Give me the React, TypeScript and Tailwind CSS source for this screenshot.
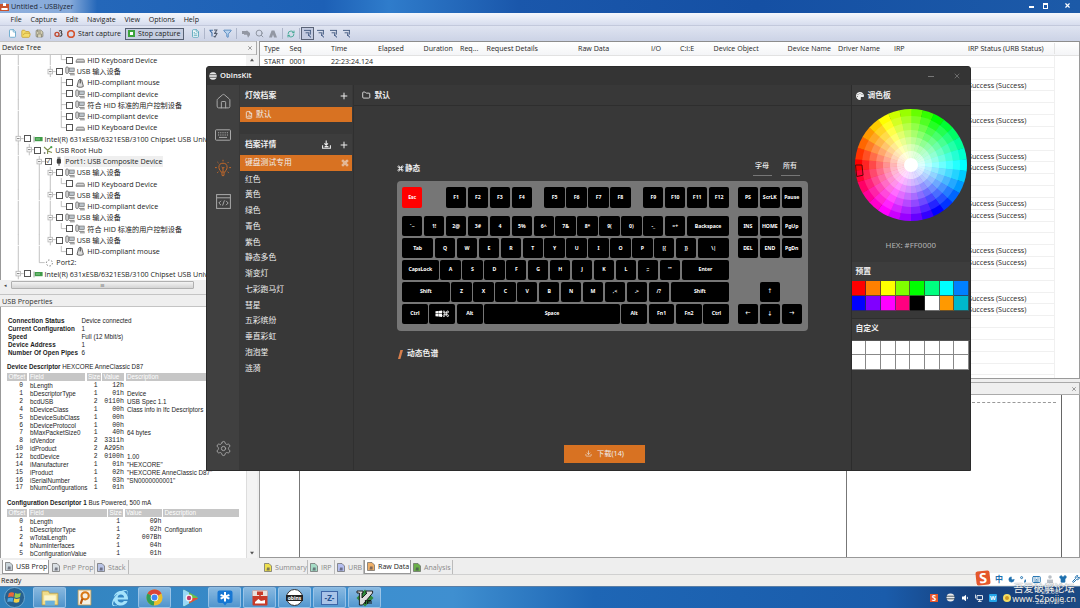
import React from "react";
import {
  House,
  Keyboard,
  Settings,
  Command,
  Plus,
  File,
  FolderOpen,
  Folder,
  Save,
  Search,
  Filter,
  RefreshCw,
  X,
  FileChartColumn,
  Download,
  Circle,
  Wrench,
  Shirt,
  Moon,
  FileText,
} from "lucide-react";
import { FaPalette, FaWindows, FaVolumeDown, FaInternetExplorer } from "react-icons/fa";

const ui = "font-['Open_Sans','Noto_Sans_CJK_SC',sans-serif]";

/* ---------- device tree ---------- */

type Node = { g: string; icon: string; label: string; checked?: boolean };

const tree: Node[] = [
  { g: "|  |L", icon: "kbd", label: "HID Keyboard Device" },
  { g: "|  +", icon: "usb", label: "USB 输入设备" },
  { g: "|   T", icon: "mouse", label: "HID-compliant mouse" },
  { g: "|   T", icon: "usb", label: "HID-compliant device" },
  { g: "|   T", icon: "usb", label: "符合 HID 标准的用户控制设备" },
  { g: "|   T", icon: "usb", label: "HID-compliant device" },
  { g: "|   L", icon: "kbd", label: "HID Keyboard Device" },
  { g: "+", icon: "card", label: "Intel(R) 631xESB/6321ESB/3100 Chipset USB Universal Host" },
  { g: "|+", icon: "hub", label: "USB Root Hub" },
  { g: "| +", icon: "plug", label: "Port1: USB Composite Device", checked: true },
  { g: "| |+", icon: "usb", label: "USB 输入设备" },
  { g: "| ||L", icon: "kbd", label: "HID Keyboard Device" },
  { g: "| |+", icon: "usb", label: "USB 输入设备" },
  { g: "| ||L", icon: "usb", label: "HID-compliant device" },
  { g: "| |+", icon: "usb", label: "USB 输入设备" },
  { g: "| ||L", icon: "usb", label: "符合 HID 标准的用户控制设备" },
  { g: "| |+", icon: "usb", label: "USB 输入设备" },
  { g: "| | L", icon: "mouse", label: "HID-compliant mouse" },
  { g: "| L", icon: "port", label: "Port2:" },
  { g: "+", icon: "card", label: "Intel(R) 631xESB/6321ESB/3100 Chipset USB Universal Host" },
];

function Guide({ c }: { c: string }) {
  return (
    <svg className="h-[11.3px] w-[10.7px] shrink-0" viewBox="0 0 10.7 11.3" fill="none" stroke="#b2b2b2" strokeWidth="0.8">
      {c === "|" && <path d="M5.3 0V11.3" />}
      {c === "T" && <path d="M5.3 0V11.3M5.3 5.6H10.7" />}
      {c === "L" && <path d="M5.3 0V5.6H10.7" />}
      {c === "+" && (
        <>
          <path d="M5.3 0V11.3M5.3 5.6H10.7" />
          <rect x="3" y="3.3" width="4.6" height="4.6" fill="#fff" />
          <path d="M4 5.6H6.6" stroke="#666" />
        </>
      )}
    </svg>
  );
}

function DeviceIcon({ kind }: { kind: string }) {
  return (
    <svg className="h-[10px] w-[10px] shrink-0" viewBox="0 0 10 10" fill="none">
      {kind === "kbd" && (
        <>
          <path d="M1 6 2.2 4H8.6L9.6 6V7.4H1Z" fill="#aaa" stroke="#777" strokeWidth=".6" />
          <path d="M2 5.4H8.6" stroke="#eee" strokeWidth=".7" />
        </>
      )}
      {kind === "usb" && (
        <>
          <rect x="0.8" y="1" width="2.6" height="6.4" rx="1" fill="#ddd" stroke="#555" strokeWidth=".7" />
          <rect x="4.6" y="2" width="4.6" height="3.6" fill="#b9c2c9" stroke="#666" strokeWidth=".6" />
          <path d="M4 7.4H9.6M5 8.8H9.8" stroke="#666" strokeWidth=".8" />
        </>
      )}
      {kind === "mouse" && (
        <>
          <path d="M3.4 3.2C3.4 .8 7 .8 7 3.2L8.4 8.4C7 9.6 3.4 9.6 2 8.4Z" fill="#ddd" stroke="#444" strokeWidth=".8" />
          <path d="M5.2 1.6V5.4" stroke="#333" strokeWidth="1" />
        </>
      )}
      {kind === "card" && (
        <>
          <path d="M1 2.6V8.4" stroke="#888" strokeWidth=".8" />
          <rect x="1.8" y="3" width="7.8" height="4.2" fill="#3f9a48" />
          <path d="M3 5H7" stroke="#8fd191" strokeWidth="1" />
        </>
      )}
      {kind === "hub" && (
        <>
          <path d="M1 2 4.6 5.2 8.4 1.8M4.6 5.2V9M4.8 6 9 7.6" stroke="#7d8d4b" strokeWidth="1.1" />
          <circle cx="8.3" cy="2.2" r="1.1" fill="#49a04d" />
          <circle cx="1.6" cy="8" r=".9" fill="#777" />
        </>
      )}
      {kind === "plug" && (
        <>
          <rect x="3.4" y=".8" width="3" height="2.2" fill="#999" />
          <rect x="2.8" y="2.8" width="4.2" height="5" rx="1.2" fill="#3c3c3c" />
          <path d="M5 7.4V9.8" stroke="#555" strokeWidth="1" />
        </>
      )}
      {kind === "port" && <circle cx="4.4" cy="5" r="3" stroke="#777" strokeWidth="1" strokeDasharray="1.4 1.7" />}
    </svg>
  );
}

function DeviceTree() {
  return (
    <div className="flex h-[226px] w-[257px] overflow-hidden bg-white">
      <div className="w-[246px] shrink-0 overflow-hidden border-l border-[#999] pl-[11.9px]">
        {tree.map((n, i) => (
          <div key={i} className="flex h-[11.26px] items-center whitespace-nowrap text-[7.15px] text-[#222]">
            {n.g.split("").map((c, k) => (
              <Guide key={k} c={c} />
            ))}
            {n.icon !== "port" && (
              <span className="flex size-[7px] shrink-0 items-center justify-center border border-[#555] bg-white text-[6px] leading-none text-[#222]">
                {n.checked ? "✓" : ""}
              </span>
            )}
            <span className={n.icon === "port" ? "flex" : "ml-[2px] flex"}>
              <DeviceIcon kind={n.icon} />
            </span>
            <span className={n.checked ? "ml-[0.4px] bg-[#efefef] px-[1px]" : n.icon === "port" ? "ml-[1.4px]" : "ml-[2px]"}>{n.label}</span>
          </div>
        ))}
      </div>
      <div className="flex h-full flex-1 justify-center bg-[#f3f3f3] pt-[3px]">
        <svg className="h-[4px] w-[4px]" viewBox="0 0 4 4"><path d="M0 3.2 2 .6 4 3.2Z" fill="#555" /></svg>
      </div>
    </div>
  );
}

/* ---------- properties ---------- */

const info = [
  ["Connection Status", "Device connected"],
  ["Current Configuration", "1"],
  ["Speed", "Full (12 Mbit/s)"],
  ["Device Address", "1"],
  ["Number Of Open Pipes", "6"],
];

const devRows = [
  ["0", "bLength", "1", "12h", ""],
  ["1", "bDescriptorType", "1", "01h", "Device"],
  ["2", "bcdUSB", "2", "0110h", "USB Spec 1.1"],
  ["4", "bDeviceClass", "1", "00h", "Class info in Ifc Descriptors"],
  ["5", "bDeviceSubClass", "1", "00h", ""],
  ["6", "bDeviceProtocol", "1", "00h", ""],
  ["7", "bMaxPacketSize0", "1", "40h", "64 bytes"],
  ["8", "idVendor", "2", "3311h", ""],
  ["10", "idProduct", "2", "A295h", ""],
  ["12", "bcdDevice", "2", "0100h", "1.00"],
  ["14", "iManufacturer", "1", "01h", '"HEXCORE"'],
  ["15", "iProduct", "1", "02h", '"HEXCORE AnneClassic D87"'],
  ["16", "iSerialNumber", "1", "03h", '"SN0000000001"'],
  ["17", "bNumConfigurations", "1", "01h", ""],
];

const cfgRows = [
  ["0", "bLength", "1", "09h", ""],
  ["1", "bDescriptorType", "1", "02h", "Configuration"],
  ["2", "wTotalLength", "2", "007Bh", ""],
  ["4", "bNumInterfaces", "1", "04h", ""],
  ["5", "bConfigurationValue", "1", "01h", ""],
];

function DescTable({ rows, cols }: { rows: string[][]; cols: string }) {
  return (
    <div>
      <div className={`grid h-[8px] gap-x-[1.5px] text-[6.3px] leading-[8px] text-white ${cols}`}>
        {["Offset", "Field", "Size", "Value", "Description"].map((h) => (
          <span key={h} className="overflow-hidden bg-[#c6c6c6] pl-[1.5px]">
            {h}
          </span>
        ))}
      </div>
      <div className="pt-[1px]">
        {rows.map((r, i) => (
          <div key={i} className={`grid h-[7.87px] gap-x-[1.5px] whitespace-nowrap leading-[7.87px] ${cols}`}>
            <span className="pr-[4px] text-right font-['Liberation_Mono',monospace] text-[6.3px]">{r[0]}</span>
            <span className="pl-[1.5px]">{r[1]}</span>
            <span className="pr-[3px] text-right font-['Liberation_Mono',monospace] text-[6.3px]">{r[2]}</span>
            <span className="text-right font-['Liberation_Mono',monospace] text-[6.6px]">{r[3]}</span>
            <span className="pl-[1.5px]">{r[4]}</span>
          </div>
        ))}
      </div>
    </div>
  );
}

function Properties() {
  return (
    <div className="flex h-[251px] w-[257px] overflow-hidden bg-white">
      <div className="w-[246px] border-l border-[#999] pl-[6px] font-['Liberation_Sans',sans-serif] text-[6.3px] text-[#1c1c1c]">
        <div className="pl-[1px] pt-[10px]">
          {info.map(([k, v]) => (
            <div key={k} className="flex h-[7.9px] whitespace-nowrap leading-[7.9px]">
              <b className="w-[73.5px] tracking-[0.05px]">{k}</b>
              <span>{v}</span>
            </div>
          ))}
        </div>
        <div className="mt-[5.5px] h-[11px] whitespace-nowrap leading-[9px]">
          <b>Device Descriptor</b> HEXCORE AnneClassic D87
        </div>
        <DescTable rows={devRows} cols="grid-cols-[20px_56.5px_14px_22px_113px]" />
        <div className="mt-[5.5px] h-[11.5px] whitespace-nowrap leading-[10px]">
          <b>Configuration Descriptor 1</b> Bus Powered, 500 mA
        </div>
        <DescTable rows={cfgRows} cols="grid-cols-[20px_78px_15px_37px_76px]" />
      </div>
      <div className="flex flex-1 items-end justify-center border-l border-[#ddd] bg-[#f3f3f3] pb-[3px]">
        <svg className="h-[4px] w-[4px]" viewBox="0 0 4 4"><path d="M0 .8 2 3.4 4 .8Z" fill="#555" /></svg>
      </div>
    </div>
  );
}

/* ---------- capture list ---------- */

const columns: [string, string][] = [
  ["Type", "w-[25.5px]"],
  ["Seq", "w-[41.5px]"],
  ["Time", "w-[47px]"],
  ["Elapsed", "w-[45.5px]"],
  ["Duration", "w-[36.5px]"],
  ["Req...", "w-[26.5px]"],
  ["Request Details", "w-[91.5px]"],
  ["Raw Data", "w-[73px]"],
  ["I/O", "w-[29px]"],
  ["C:I:E", "w-[33.5px]"],
  ["Device Object", "w-[74px]"],
  ["Device Name", "w-[50.5px]"],
  ["Driver Name", "w-[56px]"],
  ["IRP", "w-[74px]"],
  ["IRP Status (URB Status)", "w-[87px] border-r border-[#e4e4e4]"],
];

const successRows = [2, 5, 8, 9, 12, 13, 16, 17, 20, 21];

function CaptureList() {
  return (
    <div className="h-[338px] overflow-hidden border border-[#9a9a9a] border-t-[#8d8d8d] bg-white text-[7.1px] text-[#1f1f1f]">
      <div className="flex h-[14px] items-center whitespace-nowrap border-b border-[#e2e2e2] bg-gradient-to-b from-white to-[#f4f5f7] pl-[4px]">
        {columns.map(([c, w]) => (
          <span key={c} className={`shrink-0 ${w}`}>
            {c}
          </span>
        ))}
      </div>
      {Array.from({ length: 28 }, (_, i) => (
        <div key={i} className="flex h-[11.83px] w-[795px] items-center whitespace-nowrap border-b border-r border-[#f0f0f0] pl-[4px]">
          {i === 0 && (
            <>
              <span className="w-[25.5px] shrink-0">START</span>
              <span className="w-[41.5px] shrink-0">0001</span>
              <span>22:23:24.124</span>
            </>
          )}
          {successRows.includes(i) && <span className="pl-[704px] text-[7.2px]">Success (Success)</span>}
        </div>
      ))}
    </div>
  );
}

/* ---------- keyboard ---------- */

const U = 21.93;
type Key = [string, number];
const one = (s: string): Key[] => s.split(" ").map((k) => [k, 1]);

const mainRows: Key[][] = [
  [["Esc", 1], ["", 1], ...one("F1 F2 F3 F4"), ["", 0.5], ...one("F5 F6 F7 F8"), ["", 0.5], ...one("F9 F10 F11 F12")],
  [...one("`~ 1! 2@ 3# 4 5% 6^ 7& 8* 9( 0) -_ =+"), ["Backspace", 2]],
  [["Tab", 1.5], ...one("Q W E R T Y U I O P [{ ]}"), ["\\|", 1.5]],
  [["CapsLock", 1.75], ...one("A S D F G H J K L ;: '\""), ["Enter", 2.25]],
  [["Shift", 2.25], ...one("Z X C V B N M ,< .> /?"), ["Shift", 2.75]],
  [["Ctrl", 1.25], ["win", 1.25], ["Alt", 1.25], ["Space", 6.25], ["Alt", 1.25], ["Fn1", 1.25], ["Fn2", 1.25], ["Ctrl", 1.25]],
];

const navRows: Key[][] = [
  one("PS ScrLK Pause"),
  one("INS HOME PgUp"),
  one("DEL END PgDn"),
  [["", 3]],
  [["", 1], ["↑", 1], ["", 1]],
  one("← ↓ →"),
];

function KeyRow({ keys }: { keys: Key[] }) {
  return (
    <div className="flex h-[20.4px] gap-[1.6px]">
      {keys.map(([k, u], i) => (
        <div
          key={i}
          style={{ width: u * U - 1.6 }}
          className={`flex shrink-0 items-center justify-center rounded-[2px] text-[5.2px] font-bold leading-none tracking-[-0.08px] text-white ${
            k === "" ? "" : k === "Esc" ? "bg-[#ff0000]" : "bg-black"
          }`}
        >
          {k === "win" ? (
            <>
              <FaWindows className="size-[7.5px]" />
              <Command className="size-[7.5px]" strokeWidth={2.6} />
            </>
          ) : (
            k
          )}
        </div>
      ))}
    </div>
  );
}

function KeyBlock({ rows }: { rows: Key[][] }) {
  return (
    <div>
      {rows.map((r, i) => (
        <div key={i} className={i === 0 ? "mb-[8.4px]" : "mb-[1.55px]"}>
          <KeyRow keys={r} />
        </div>
      ))}
    </div>
  );
}

/* ---------- colour wheel ---------- */

function Wheel() {
  const parts: React.ReactElement[] = [];
  const R = 56;
  const pt = (r: number, a: number) => {
    const t = (a * Math.PI) / 180;
    return `${(R + r * Math.sin(t)).toFixed(2)} ${(R - r * Math.cos(t)).toFixed(2)}`;
  };
  for (let ring = 8; ring >= 2; ring--) {
    const r = ring * 7;
    const sat = (ring - 1) / 7;
    for (let s = 0; s < 30; s++) {
      const a = s * 12;
      const light = 100 - 50 * sat;
      parts.push(
        <path
          key={`${ring}-${s}`}
          d={`M${R} ${R}L${pt(r, a)}A${r} ${r} 0 0 1 ${pt(r, a + 12.3)}Z`}
          fill={`hsl(${(a + 96) % 360} 100% ${light}%)`}
        />
      );
    }
  }
  return (
    <svg className="size-[112px]" viewBox="0 0 112 112">
      {parts}
      <circle cx="56" cy="56" r="7" fill="#fff" />
      <path d={`M${pt(55.5, 270)}L${pt(49, 270)}L${pt(49, 258)}L${pt(55.5, 258)}Z`} fill="none" stroke="#5a0a0a" strokeWidth="1" />
    </svg>
  );
}

const presets = [
  "bg-[#ff0000]", "bg-[#ff8000]", "bg-[#ffff00]", "bg-[#80ff00]", "bg-[#00ff00]", "bg-[#00ff80]", "bg-[#00ffff]", "bg-[#0080ff]",
  "bg-[#0000ff]", "bg-[#8000ff]", "bg-[#ff00ff]", "bg-[#ff0080]", "bg-black", "bg-white", "bg-[#ff9900]", "bg-[#00b8cc]",
];

const effects = ["红色", "黄色", "绿色", "青色", "紫色", "静态多色", "渐变灯", "七彩跑马灯", "彗星", "五彩缤纷", "垂直彩虹", "泡泡堂", "涟漪"];

function ObinsKit() {
  return (
    <div className="absolute left-[206px] top-[66px] flex h-[405px] w-[765px] flex-col overflow-hidden rounded-t-[3px] border border-[#2b2b2b] bg-[#383838] font-['Noto_Sans','Noto_Sans_CJK_SC',sans-serif] text-[7.8px] text-[#eee]">
      <div className="flex h-[18px] shrink-0 items-center bg-[#343434] pl-[2px] pr-[9px]">
        <svg className="size-[8px]" viewBox="0 0 8 8">
          <circle cx="4" cy="4" r="3.8" fill="#e8e8e8" />
          <path d="M0 2.7H8M0 5.3H8" stroke="#444" strokeWidth=".8" />
        </svg>
        <span className="ml-[3px] text-[7.6px] font-semibold">ObinsKit</span>
        <span className="ml-auto mr-[19px] h-px w-[6px] bg-[#777]" />
        <X className="size-[8px] text-[#888]" />
      </div>
      <div className="flex min-h-0 flex-1">
        <div className="flex w-[32px] shrink-0 flex-col items-center bg-[#404040] text-[#a9a9a9]">
          <House className="mt-[8px] size-[17px]" strokeWidth={1.4} />
          <svg className="mt-[19px] h-[12px] w-[16px]" viewBox="0 0 16 12" fill="none" stroke="currentColor">
            <rect x=".5" y=".8" width="15" height="10.4" rx=".8" />
            <path d="M3 3.8H13.4M3 6H13.4" strokeDasharray="1.2 1" strokeWidth="1.1" />
            <path d="M4 8.4H12" />
          </svg>
          <svg className="mt-[18px] h-[18px] w-[18px] text-[#c0682a]" viewBox="0 0 18 18" fill="none" stroke="currentColor" strokeWidth="1">
            <path d="M7 13.2C7 11.6 4.9 11 4.9 8.3A4.1 4.1 0 0 1 13.1 8.3C13.1 11 11 11.6 11 13.2ZM7 15H11M7.8 16.6H10.2M9 8V13M7.6 8 9 9.4 10.4 8" />
            <path d="M9 .8V2.4M3.4 3 4.5 4.1M14.6 3 13.5 4.1M1 8.6H2.8M15.2 8.6H17M3.2 13.8 4.4 12.8M14.8 13.8 13.6 12.8" />
          </svg>
          <svg className="mt-[17px] h-[15px] w-[15px]" viewBox="0 0 15 15" fill="none" stroke="currentColor">
            <rect x=".6" y=".6" width="13.8" height="13.8" />
            <path d="M.6 3.8H14.4M5 6.8 2.8 9 5 11.2M10 6.8 12.2 9 10 11.2M8.4 6.4 6.6 11.6" />
          </svg>
          <Settings className="mb-[13px] mt-auto size-[17px]" strokeWidth={1.3} />
        </div>
        <div className="w-[115px] shrink-0 border-r border-[#303030] pl-[1px] pr-[1px]">
          <div className="flex h-[22px] items-center bg-[#3d3d3d] pl-[5px] pr-[3px] font-bold">
            灯效档案
            <Plus className="ml-auto size-[10px]" strokeWidth={2.4} />
          </div>
          <div className="flex h-[15px] items-center bg-[#d87222] pl-[5px]">
            <FileChartColumn className="mr-[3px] size-[8px]" strokeWidth={2.4} />
            默认
          </div>
          <div className="mt-[12px] flex h-[21px] items-center bg-[#3d3d3d] pl-[5px] pr-[3px] font-bold">
            档案详情
            <svg className="ml-auto mr-[8px] h-[9px] w-[9px]" viewBox="0 0 9 9" fill="none" stroke="currentColor" strokeWidth="1.1">
              <path d="M4.2 .5V5M2.4 3.4 4.2 5.2 6 3.4M.6 5.2V8.2H8.4V5.2M2.6 6.6H6.4" />
            </svg>
            <Plus className="size-[10px]" strokeWidth={2.4} />
          </div>
          <div className="flex h-[16px] items-center bg-[#d87222] pl-[5px] pr-[3px]">
            键盘测试专用
            <Command className="ml-auto size-[8px]" strokeWidth={2} />
          </div>
          <div className="pt-[0.6px]">
            {effects.map((e) => (
              <div key={e} className="flex h-[15.75px] items-center pl-[5px]">
                {e}
              </div>
            ))}
          </div>
        </div>
        <div className="flex min-w-0 flex-1 flex-col">
          <div className="flex h-[21px] shrink-0 items-center border-b border-[#2e2e2e] pl-[8px] pt-px font-bold">
            <Folder className="mr-[4px] size-[8.5px]" strokeWidth={2.4} />
            默认
          </div>
          <div className="mt-[54px] flex h-[17px] shrink-0 items-center pl-[43px] pr-[51px] text-[7.6px] font-bold">
            <Command className="size-[7px]" strokeWidth={3} />
            <span className="pl-px">静态</span>
            <span className="ml-auto flex h-[15px] w-[19px] justify-center border-b border-[#777] text-[7px] font-medium">字母</span>
            <span className="ml-[9px] flex h-[15px] w-[19px] justify-center border-b border-[#777] text-[7px] font-medium">所有</span>
          </div>
          <div className="ml-[43px] mt-[4px] flex h-[150px] w-[411px] shrink-0 gap-[8.4px] rounded-[4px] bg-[#767676] pl-[5px] pt-[6.2px]">
            <KeyBlock rows={mainRows} />
            <KeyBlock rows={navRows} />
          </div>
          <div className="mt-[16px] flex h-[14px] shrink-0 items-center pl-[44px] font-bold">
            <svg className="mr-[4px] h-[9px] w-[5px]" viewBox="0 0 5 9">
              <path d="M2.4 0H5L2.4 9H0Z" fill="#d87f4c" />
            </svg>
            动态色谱
          </div>
          <div className="mb-[7px] ml-[210px] mt-auto flex h-[18.5px] w-[81px] items-center justify-center gap-[5px] bg-[#d87222] text-[7.2px]">
            <Download className="size-[7px]" strokeWidth={2} />
            下载(14)
          </div>
        </div>
        <div className="w-[119.5px] shrink-0 border-l border-[#2c2c2c]">
          <div className="flex h-[21px] items-center border-b border-[#2e2e2e] bg-[#3d3d3d] pl-[4px] pt-px font-bold">
            <FaPalette className="mr-[4px] size-[8px]" />
            调色板
          </div>
          <div className="flex justify-center pt-[2.5px]">
            <Wheel />
          </div>
          <div className="mt-[17.5px] h-[14px] text-center text-[7.9px] leading-[14px] text-[#b5b5b5]">HEX: #FF0000</div>
          <div className="mt-[10px] flex h-[19px] items-center bg-[#3d3d3d] pl-[4px] font-bold">预置</div>
          <div className="grid h-[30px] grid-cols-8 pr-[1px]">
            {presets.map((c) => (
              <span key={c} className={`border-b border-r border-[#333]/70 ${c}`} />
            ))}
          </div>
          <div className="mt-[7px] flex h-[21.5px] items-center border-t border-[#2e2e2e] bg-[#3d3d3d] pl-[4px] font-bold">自定义</div>
          <div className="grid h-[30px] grid-cols-8 border-t border-[#555] pr-[1px]">
            {presets.map((c) => (
              <span key={c} className="border-b border-r border-[#888] bg-white" />
            ))}
          </div>
        </div>
      </div>
    </div>
  );
}

/* ---------- chrome ---------- */

const Sep = () => <span className="block h-[11px] w-px shrink-0 bg-[#aeb6ca]" />;

function WinGlyph({ active }: { active?: boolean }) {
  return (
    <span className={`flex size-[13px] items-center justify-center ${active ? "border border-[#5a6377] bg-[#c3cbe0]" : ""}`}>
      <svg className="size-[9px]" viewBox="0 0 9 9" fill="none" stroke="#4d6388" strokeWidth="1">
        <path d="M1 1.4H8M7.4 1V5.6M2.6 3.8H6.4M5.8 4V7" />
        <path d="M5 5.6 8 8.4" stroke="#2f4a7a" />
      </svg>
    </span>
  );
}

function Toolbar() {
  return (
    <div className="flex h-[16px] shrink-0 items-center whitespace-nowrap border-t border-[#c3c9dc] bg-gradient-to-b from-[#dfe4f1] to-[#ccd3e6] pl-[8px] text-[7.2px] text-[#222]">
      <File className="size-[9px] fill-white text-[#4e9bc4]" />
      <FolderOpen className="ml-[4px] size-[10px] fill-[#f4dc6a] text-[#c6a133]" />
      <Save className="ml-[4px] size-[9px] fill-[#d9d3b5] text-[#77756a]" />
      <span className="ml-[6px] mr-[3px]"><Sep /></span>
      <svg className="size-[9px]" viewBox="0 0 9 9" fill="none" stroke="#c0492f" strokeWidth="1.4">
        <circle cx="3" cy="5.4" r="2" />
        <path d="M5 2.2C7 .6 8.6 2.4 7 3.8 9 5 7.4 7.8 5.4 7" stroke="#444" strokeWidth="1.1" />
      </svg>
      <Circle className="ml-[4px] size-[8px] text-[#d5532d]" strokeWidth={5} />
      <span className="ml-[3px] text-[7.1px]">Start capture</span>
      <span className="ml-[4px] flex h-[12px] w-[59px] items-center border border-[#566073] bg-[#c6cee1] pl-[2px] text-[7.1px]">
        <span className="mr-[3px] size-[7px] border-2 border-[#3ca33c] bg-white" />
        Stop capture
      </span>
      <FileText className="ml-[7px] size-[9px] fill-white text-[#3f9bb0]" />
      <span className="ml-[4px]"><Sep /></span>
      <svg className="ml-[4px] h-[9px] w-[9px]" viewBox="0 0 9 9" fill="none" stroke="#4170a8" strokeWidth="1.1">
        <path d="M.5 1.2H4M.8 1.4 3 4V7.4" />
        <path d="M5 1H7.8L6 4 8 4.4 6 8 4.6 7.2M5 4.4H8" stroke="#555f70" />
      </svg>
      <Filter className="ml-[5px] size-[9px] fill-[#b9d3ef] text-[#3d79b5]" />
      <span className="ml-[4px]"><Sep /></span>
      <svg className="ml-[5px] h-[8px] w-[8px]" viewBox="0 0 8 8"><path d="M0 1H4L5 .4 8 3V5L6 7.8 5 4.8H2V4H0Z" fill="#9297a3" /></svg>
      <Search className="ml-[5px] size-[9px] text-[#898f9c]" strokeWidth={2.5} />
      <svg className="ml-[5px] h-[8px] w-[8px]" viewBox="0 0 8 8"><path d="M0 7.6 2.6 .4H5.4L8 7.6H5L4 4.6 3 7.6Z" fill="#9297a3" /></svg>
      <span className="ml-[5px]"><Sep /></span>
      <RefreshCw className="ml-[4px] size-[8px] text-[#3aa58f]" strokeWidth={2.6} />
      <span className="ml-[4px] mr-[1px]"><Sep /></span>
      <WinGlyph active />
      <WinGlyph />
      <WinGlyph />
      <WinGlyph />
    </div>
  );
}

function Tab({ label, active, icon, w }: { label: string; active?: boolean; icon: string; w: string }) {
  return (
    <div
      className={`flex h-[14px] shrink-0 items-center gap-[3px] whitespace-nowrap pl-[2px] ${w} ${
        active ? "border border-t-0 border-[#999] bg-white text-[#222]" : "border-r border-[#bbb] text-[#888]"
      }`}
    >
      <svg className={`h-[9px] w-[8px] shrink-0 ${icon}`} viewBox="0 0 8 9">
        <path d="M.5 .5H5L7.5 3V8.5H.5Z" fill="currentColor" stroke="#666" strokeWidth=".7" />
        <path d="M2.5 7.5 3 4.4H5.6V7.5Z" fill="#445" fillOpacity=".65" />
      </svg>
      {label}
    </div>
  );
}

function TaskButton({ children, open }: { children: React.ReactNode; open?: boolean }) {
  return (
    <span
      className={`flex h-[21px] w-[33px] shrink-0 items-center justify-center rounded-[2px] ${
        open ? "border border-[#a9cdec]/70 bg-gradient-to-b from-[#9cc4e6]/80 to-[#5c9bd0]/70" : ""
      }`}
    >
      {children}
    </span>
  );
}

function Taskbar() {
  return (
    <div className="flex h-[22px] shrink-0 items-center gap-[2px] border-t border-[#5a7ea5] bg-[linear-gradient(90deg,#3182bd_0%,#3d8fcf_35%,#3f8fd0_42%,#1e66b5_55%,#1a5cab_82%,#17407c_90%,#1b4a84_100%)]">
      <svg className="ml-[4px] size-[21px] shrink-0" viewBox="0 0 22 22">
        <circle cx="11" cy="11" r="10.5" fill="#27618f" stroke="#7fb7dc" strokeWidth=".8" />
        <path d="M5 6.6Q8 4.8 10.6 6.2L9.9 10.6Q7.4 9.4 4.2 10.8Z" fill="#e8663c" />
        <path d="M11.6 6.4Q14.4 8 17.6 6.4L16.8 10.6Q13.6 12.2 10.9 10.8Z" fill="#9bc84a" />
        <path d="M4 11.8Q7 10.6 9.7 11.6L9 15.8Q6.4 14.6 3.4 15.8Z" fill="#4fa7e2" />
        <path d="M10.7 11.9Q13.2 13.2 16.5 11.7L15.8 15.8Q12.6 17.4 10 15.8Z" fill="#f5cf45" />
      </svg>
      <div className="flex gap-[2px] pl-[6px]">
        <TaskButton open>
          <svg className="size-[18px]" viewBox="0 0 17 17">
            <path d="M1 2H7L8 4H16V15H1Z" fill="#f0dc8a" stroke="#b89b42" strokeWidth=".7" />
            <path d="M3 6H14V11H3Z" fill="#fdf6cc" />
            <path d="M4 11H13V15.6H4Z" fill="#6ab1dc" />
          </svg>
        </TaskButton>
        <TaskButton>
          <svg className="size-[17px]" viewBox="0 0 16 16">
            <path d="M2 1H14V15H2Z" fill="#f6f1e5" stroke="#d0a04b" strokeWidth=".7" />
            <circle cx="8.6" cy="6.4" r="3.4" fill="none" stroke="#d87916" strokeWidth="2" />
            <path d="M6 9 4.4 14" stroke="#b6540d" strokeWidth="2" />
          </svg>
        </TaskButton>
        <TaskButton><FaInternetExplorer className="size-[16px] text-[#a5e3fb]" /></TaskButton>
        <TaskButton open>
          <svg className="size-[17px]" viewBox="0 0 18 18">
            <circle cx="9" cy="9" r="8.5" fill="#e8bf2c" />
            <path d="M9 9 1.6 4.8A8.5 8.5 0 0 1 16.4 4.8Z" fill="#db4437" />
            <path d="M9 9 1.6 4.8A8.5 8.5 0 0 0 8.4 17.5Z" fill="#2f9d58" />
            <circle cx="9" cy="9" r="4" fill="#fff" />
            <circle cx="9" cy="9" r="3.1" fill="#4285f4" />
          </svg>
        </TaskButton>
        <TaskButton>
          <svg className="size-[18px]" viewBox="0 0 18 18">
            <path d="M2 2Q2 .4 3.6 1L16 7.8Q17.6 9 16 10.2L3.6 17Q2 17.6 2 16Z" fill="#6cc04a" />
            <path d="M2 2Q2 .4 3.6 1L8 3.4V14.6L3.6 17Q2 17.6 2 16Z" fill="#9ad8f6" />
            <path d="M8 14.6 9 9 16.8 9Q16.8 9.8 16 10.2Z" fill="#e34b3c" />
            <circle cx="8" cy="9" r="3.4" fill="#f3f3f3" />
            <circle cx="8" cy="9" r="2.2" fill="#c23a6a" />
          </svg>
        </TaskButton>
        <TaskButton open>
          <svg className="size-[16px]" viewBox="0 0 16 16">
            <path d="M2.5 .5H13.5Q15.5 .5 15.5 2.5V11Q15.5 13 13.5 13H10L8 15.6 6 13H2.5Q.5 13 .5 11V2.5Q.5 .5 2.5 .5Z" fill="#1777d3" />
            <path d="M8 2V11.4M3.6 4.8 12.4 8.6M12.4 4.8 3.6 8.6" stroke="#fff" strokeWidth="2" />
          </svg>
        </TaskButton>
        <TaskButton open>
          <svg className="size-[16px]" viewBox="0 0 16 16">
            <rect x=".5" y=".5" width="15" height="15" rx="1" fill="#c93a28" />
            <path d="M.5 .5H15.5V6H.5Z" fill="#e9e1db" />
            <path d="M5 1.5H11V5H9L8 7.5 7 5H5Z" fill="#c93a28" />
            <path d="M3 12 6.4 9 9 11 13 10V13.4H3Z" fill="#fff" />
          </svg>
        </TaskButton>
        <TaskButton open>
          <span className="flex size-[17px] items-center justify-center rounded-full border border-[#333] bg-white">
            <span className="w-[17px] shrink-0 bg-[#222] text-center text-[5px] font-bold leading-[6px] text-white">obins</span>
          </span>
        </TaskButton>
        <TaskButton open>
          <span className="flex h-[14px] w-[17px] items-center justify-center border border-[#3d66a8] bg-[#a9c4e8] text-[8px] font-bold leading-none text-[#23508f]">
            -Z-
          </span>
        </TaskButton>
        <TaskButton open>
          <svg className="size-[18px]" viewBox="0 0 18 18">
            <path d="M9 .5 17.5 9 9 17.5.5 9Z" fill="#2f8a3b" />
            <path d="M1 2H7V4H6V9L11 4H10V2H16.6V4L6.6 16H3.4V4H1Z" fill="#ddd" stroke="#111" strokeWidth=".9" />
            <path d="M9.4 11V15M11.4 15V11.6H13V15M13 11.6H15V15" stroke="#111" fill="none" />
          </svg>
        </TaskButton>
      </div>
      <div className="ml-auto flex items-center gap-[6px] pr-[69px]">
        <span className="flex size-[8px] items-center justify-center bg-[#e8572c] text-[8px] font-bold leading-none text-white">S</span>
        <svg className="ml-[2px] size-[9px]" viewBox="0 0 9 9"><circle cx="4.5" cy="4.5" r="4" fill="#eee" /><path d="M0 3.2H9M0 5.8H9" stroke="#234" strokeWidth=".8" /></svg>
        <FaVolumeDown className="size-[8px] text-white" />
        <svg className="size-[8px]" viewBox="0 0 8 8" fill="none" stroke="#fff" strokeWidth=".9"><path d="M2 1.6H7.5V5.6H2ZM4.7 5.6V7.4M3 7.4H6.6M.4 .6V4.4" /></svg>
        <span className="flex size-[8px] items-center justify-center rounded-[1px] bg-[#24a5e8] text-[6px] font-bold leading-none text-white">W</span>
        <span className="size-[8px] rounded-full border-2 border-[#f3dd63] bg-[#d09722]" />
      </div>
    </div>
  );
}

export default function App() {
  return (
    <div className={`relative flex h-[608px] w-[1080px] flex-col overflow-hidden bg-[#eeeeee] ${ui}`}>
      <div className="flex h-[13px] shrink-0 items-center bg-[linear-gradient(90deg,#8fb0dd_0%,#86aada_6.5%,#2467b9_9%,#1d60b6_30%,#2f7ccb_36%,#1a57ab_48%,#1550a4_70%,#1c5aa8_100%)] pr-[9px] text-[7.2px] text-[#1b2433]">
        <svg className="mr-[2px] h-[8px] w-[9px]" viewBox="0 0 9 8">
          <rect y="1" width="9" height="7" fill="#c9532d" />
          <path d="M3 0H6V3H3ZM1.4 5H7.6V7H1.4Z" fill="#fff" />
        </svg>
        Untitled - USBlyzer
        <span className="ml-auto flex items-center gap-[9px] pb-[2px] text-white">
          <span className="mt-[3px] h-[2px] w-[5px] bg-white" />
          <span className="h-[6px] w-[5px] border border-t-2 border-white" />
          <X className="ml-[7px] size-[7px]" strokeWidth={4} />
        </span>
      </div>
      <div className="flex h-[12px] shrink-0 items-center gap-[8.7px] bg-gradient-to-b from-[#f4f7fc] to-[#d7ddee] pl-[10.5px] text-[7.1px] text-[#222]">
        <span>File</span>
        <span>Capture</span>
        <span>Edit</span>
        <span>Navigate</span>
        <span>View</span>
        <span>Options</span>
        <span>Help</span>
      </div>
      <Toolbar />
      <div className="flex h-[517px] shrink-0">
        <div className="flex w-[257px] shrink-0 flex-col border-r border-[#aaa]">
          <div className="flex h-[13.5px] shrink-0 items-center justify-between border-y border-[#c4c4c4] bg-[#f3f3f3] pl-[2px] pr-[3px] text-[7.2px] text-[#222]">
            Device Tree
            <X className="size-[6px] text-[#444]" />
          </div>
          <DeviceTree />
          <div className="flex h-[10px] shrink-0 items-center bg-[#efefef] pl-[4px] text-[5px] leading-none text-[#444]">
            ◂
            <span className="ml-[4px] flex h-[8px] w-[183px] items-center justify-center rounded-[1px] border border-[#b0b0b0] bg-gradient-to-b from-[#f3f3f3] to-[#d4d4d4]">
              ııı
            </span>
          </div>
          <div className="mt-[4px] flex h-[13px] shrink-0 items-center border-y border-[#c4c4c4] bg-[#efefef] pl-[2px] pt-[2px] text-[7.2px] text-[#333]">USB Properties</div>
          <Properties />
        </div>
        <div className="ml-[2px] flex min-w-0 flex-1 flex-col">
          <CaptureList />
          <div className="mt-[3px] flex h-[13px] items-center justify-end border border-[#aaa] bg-[#efefef] pr-[2px]">
            <X className="size-[6px] text-[#444]" />
          </div>
          <div className="flex flex-1 border-x border-b border-[#999] bg-white">
            <div className="w-[40px] border-r border-[#777]" />
            <div className="w-[547px] border-r border-[#777]" />
            <div className="w-[215px] border-r border-[#666] pl-[125px] pr-[5px] pt-[7px]">
              <div className="border-t border-dashed border-[#999]" />
            </div>
          </div>
        </div>
      </div>
      <div className="flex h-[17px] shrink-0 items-start border-b border-[#d0d0d0] pt-[2px] text-[7.1px]">
        <div className="flex w-[262px] pl-[2px]">
          <Tab label="USB Prop" active icon="text-[#c9d4da]" w="w-[47px]" />
          <Tab label="PnP Prop" icon="text-[#d9dfe3] ml-[1px]" w="w-[46px]" />
          <Tab label="Stack" icon="text-[#b9c4e6]" w="w-[34px]" />
        </div>
        <Tab label="Summary" icon="text-[#eee04e]" w="w-[46px]" />
        <Tab label="IRP" icon="text-[#a5dcc6]" w="w-[27px]" />
        <Tab label="URB" icon="text-[#b5bff0]" w="w-[29px]" />
        <Tab label="Raw Data" active icon="text-[#eeb06a]" w="w-[47px]" />
        <Tab label="Analysis" icon="text-[#6bb04a]" w="w-[42px]" />
      </div>
      <div className="flex h-[11px] shrink-0 items-center bg-[#efeeec] pl-[1px] text-[7.2px] text-[#222]">Ready</div>
      <Taskbar />
      <ObinsKit />
      <div className="absolute left-[976px] top-[573px] flex h-[12px] w-[104px] items-center gap-[5px] bg-white pl-[19px] text-[8px] font-bold text-[#1d6fae]">
        <span className="absolute left-0 top-[-2px] flex size-[14px] -rotate-6 items-center justify-center rounded-[2px] bg-[#e4572b] text-[14px] leading-none text-white">S</span>
        <span className="w-[8px] leading-none">中</span>
        <Moon className="size-[7px] fill-current" />
        <svg className="h-[8px] w-[7px]" viewBox="0 0 7 8"><circle cx="1.6" cy="2.6" r="1" fill="none" stroke="currentColor" /><path d="M5 4.6Q6 6 4.4 7.4" stroke="currentColor" strokeWidth="1.4" fill="none" /></svg>
        <Keyboard className="size-[9px]" strokeWidth={2.5} />
        <svg className="size-[8px]" viewBox="0 0 8 8" fill="#b9bfc6"><circle cx="4" cy="2" r="1.8" /><path d="M1 8V4.6H7V8Z" /></svg>
        <Shirt className="size-[8px] fill-current" />
        <Wrench className="size-[8px]" strokeWidth={3} />
      </div>
      <div className="absolute left-[1030px] top-[588px] flex w-[40px] flex-col items-center text-[6.8px] text-white/75">
        <span className="leading-[8px]">22:30</span>
        <span className="mt-[2px] leading-[8px]">2021/6/3</span>
      </div>
      <div className="absolute left-[1010px] top-[582px] flex w-[68px] flex-col items-center whitespace-nowrap font-['Noto_Sans','Noto_Sans_CJK_SC',sans-serif] text-white/95">
        <span className="text-[10.2px] leading-[12px] [text-shadow:0_0_1px_#456]">吾爱破解论坛</span>
        <span className="text-[8.6px] leading-[10px] [text-shadow:0_0_1px_#234]">www.52pojie.cn</span>
      </div>
    </div>
  );
}
